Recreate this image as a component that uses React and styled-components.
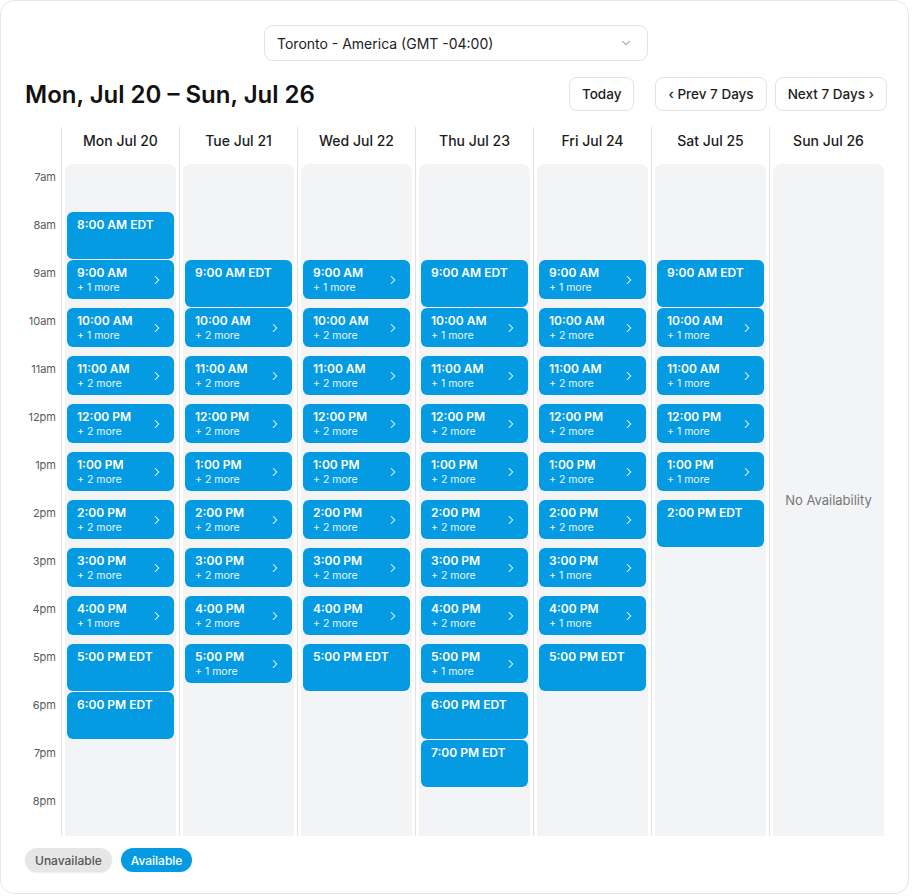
import React from 'react'
import styled, {createGlobalStyle} from 'styled-components'
import {ChevronDown, ChevronRight} from 'lucide-react'

const GlobalStyle = createGlobalStyle`
  body {
    margin: 0;
    background: #fff;
    font-family: Inter, "Noto Sans", "Liberation Sans", sans-serif;
    color: #1c1c1c;
  }
`

const HOURS = ['7am','8am','9am','10am','11am','12pm','1pm','2pm','3pm','4pm','5pm','6pm','7pm','8pm']
const LABELS = ['7:00 AM','8:00 AM','9:00 AM','10:00 AM','11:00 AM','12:00 PM','1:00 PM','2:00 PM','3:00 PM','4:00 PM','5:00 PM','6:00 PM','7:00 PM']

// each entry: [hour index from 7am, extra slots] — 0 extra means a single EDT slot
const DAYS = [
  {name: 'Mon Jul 20', slots: [[1,0],[2,1],[3,1],[4,2],[5,2],[6,2],[7,2],[8,2],[9,1],[10,0],[11,0]]},
  {name: 'Tue Jul 21', slots: [[2,0],[3,2],[4,2],[5,2],[6,2],[7,2],[8,2],[9,2],[10,1]]},
  {name: 'Wed Jul 22', slots: [[2,1],[3,2],[4,2],[5,2],[6,2],[7,2],[8,2],[9,2],[10,0]]},
  {name: 'Thu Jul 23', slots: [[2,0],[3,1],[4,1],[5,2],[6,2],[7,2],[8,2],[9,2],[10,1],[11,0],[12,0]]},
  {name: 'Fri Jul 24', slots: [[2,1],[3,2],[4,2],[5,2],[6,2],[7,2],[8,1],[9,1],[10,0]]},
  {name: 'Sat Jul 25', slots: [[2,0],[3,1],[4,1],[5,1],[6,1],[7,0]]},
  {name: 'Sun Jul 26', slots: []},
]

const BLUE = '#049be3'

const Card = styled.div`
  box-sizing: border-box;
  width: 909px;
  border: 1px solid #e6e6e6;
  border-radius: 14px;
  padding: 24px 21px 21px 24px;
  display: flex;
  flex-direction: column;
`

const ZoneRow = styled.div`
  display: flex;
  justify-content: center;
  margin-bottom: 16px;
`

const ZoneSelect = styled.div`
  box-sizing: border-box;
  width: 384px;
  height: 36px;
  border: 1px solid #e3e3e3;
  border-radius: 9px;
  display: flex;
  align-items: center;
  justify-content: space-between;
  padding: 0 14px 0 12px;
  font-size: 14px;
  color: #222;
`

const HeaderRow = styled.div`
  display: flex;
  align-items: center;
  height: 34px;
  margin-bottom: 16px;
`

const Title = styled.h1`
  margin: 0;
  flex: 1;
  font-size: 24px;
  font-weight: 600;
  color: #111;
`

const NavButton = styled.button`
  box-sizing: border-box;
  height: 34px;
  padding: 0 12px;
  margin-left: ${p => p.$gap}px;
  border: 1px solid #e3e3e3;
  border-radius: 8px;
  background: #fff;
  font-family: inherit;
  font-size: 13.5px;
  font-weight: 500;
  color: #1c1c1c;
`

const Grid = styled.div`
  display: grid;
  grid-template-columns: 36px repeat(7, 118px);
`

const TimeColumn = styled.div`
  display: grid;
  grid-template-rows: 37px repeat(14, 48px);
`

const TimeLabel = styled.div`
  font-size: 11px;
  color: #5a5a5a;
  text-align: right;
  padding: 6px 5px 0 0;
`

const DayColumn = styled.div`
  box-sizing: border-box;
  border-left: 1px solid #e2e2e2;
  padding: 0 3px;
  display: flex;
  flex-direction: column;
`

const DayHeader = styled.div`
  box-sizing: border-box;
  height: 37px;
  padding-top: 5px;
  text-align: center;
  font-size: 14px;
  line-height: 18px;
  font-weight: 500;
  color: #1c1c1c;
`

const DayBody = styled.div`
  background: #f3f4f5;
  border-radius: 8px 8px 0 0;
  display: grid;
  grid-template-rows: repeat(14, 48px);
`

const Empty = styled.div`
  grid-row: 1 / -1;
  align-self: center;
  text-align: center;
  font-size: 13px;
  color: #777;
`

const Slot = styled.button`
  grid-row: ${p => p.$row};
  align-self: start;
  box-sizing: border-box;
  margin: 0 2px;
  height: ${p => (p.$single ? 47 : 39)}px;
  border: none;
  border-radius: 6px;
  background: ${BLUE};
  color: #fff;
  font-family: inherit;
  text-align: left;
  display: flex;
  align-items: ${p => (p.$single ? 'flex-start' : 'center')};
  justify-content: space-between;
  padding: ${p => (p.$single ? '5px 10px 0 10px' : '0 10px 0 10px')};
`

const SlotTime = styled.div`
  font-size: 12px;
  font-weight: 600;
  line-height: 16px;
`

const SlotMore = styled.div`
  font-size: 10.5px;
  line-height: 14px;
  opacity: 0.92;
`

const Legend = styled.div`
  display: flex;
  gap: 9px;
  margin-top: 12px;
`

const Pill = styled.span`
  height: 24px;
  padding: 0 10px;
  border-radius: 12px;
  display: flex;
  align-items: center;
  font-size: 12px;
  font-weight: 500;
  background: ${p => (p.$on ? BLUE : '#e6e6e6')};
  color: ${p => (p.$on ? '#fff' : '#555')};
  box-shadow: ${p => (p.$on ? 'none' : '0 1px 2px rgba(0,0,0,0.08)')};
`

function TimeSlot({hour, extra}) {
  if (!extra) {
    return (
      <Slot $row={hour + 1} $single>
        <SlotTime>{LABELS[hour]} EDT</SlotTime>
      </Slot>
    )
  }
  return (
    <Slot $row={hour + 1}>
      <div>
        <SlotTime>{LABELS[hour]}</SlotTime>
        <SlotMore>+ {extra} more</SlotMore>
      </div>
      <ChevronRight size={14} strokeWidth={1.75} />
    </Slot>
  )
}

export default function App() {
  return (
    <>
      <GlobalStyle />
      <Card>
        <ZoneRow>
          <ZoneSelect>
            <span>Toronto - America (GMT -04:00)</span>
            <ChevronDown size={14} color="#b5b5b5" />
          </ZoneSelect>
        </ZoneRow>
        <HeaderRow>
          <Title>Mon, Jul 20 – Sun, Jul 26</Title>
          <NavButton>Today</NavButton>
          <NavButton $gap={21}>‹ Prev 7 Days</NavButton>
          <NavButton $gap={8}>Next 7 Days ›</NavButton>
        </HeaderRow>
        <Grid>
          <TimeColumn>
            <div />
            {HOURS.map(h => <TimeLabel key={h}>{h}</TimeLabel>)}
          </TimeColumn>
          {DAYS.map(day => (
            <DayColumn key={day.name}>
              <DayHeader>{day.name}</DayHeader>
              <DayBody>
                {day.slots.length === 0 && <Empty>No Availability</Empty>}
                {day.slots.map(([hour, extra]) => (
                  <TimeSlot key={hour} hour={hour} extra={extra} />
                ))}
              </DayBody>
            </DayColumn>
          ))}
        </Grid>
        <Legend>
          <Pill>Unavailable</Pill>
          <Pill $on>Available</Pill>
        </Legend>
      </Card>
    </>
  )
}
